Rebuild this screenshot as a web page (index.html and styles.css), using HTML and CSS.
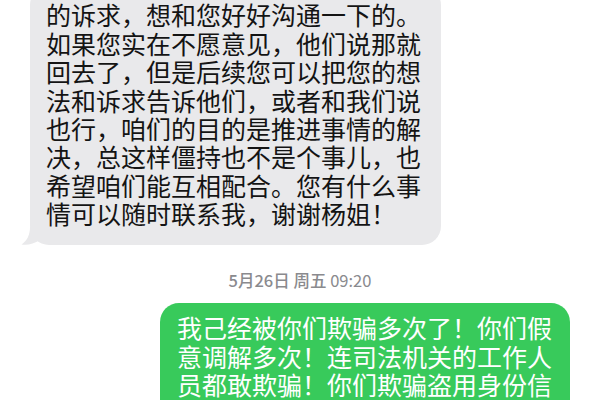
FILE: index.html
```html
<!DOCTYPE html>
<html lang="zh-CN">
<head>
<meta charset="utf-8">
<title>信息</title>
<link rel="stylesheet" href="styles.css">
</head>
<body>
<div class="chat">
  <div class="row row-in">
    <div class="bubble bubble-in">
      <p class="msg">的诉求，想和您好好沟通一下的。<br>如果您实在不愿意见，他们说那就<br>回去了，但是后续您可以把您的想<br>法和诉求告诉他们，或者和我们说<br>也行，咱们的目的是推进事情的解<br>决，总这样僵持也不是个事儿，也<br>希望咱们能互相配合。您有什么事<br>情可以随时联系我，谢谢杨姐！</p>
      <svg class="tail-in" width="20" height="18" viewBox="0 0 20 18"><path d="M9 0 C9 8 6 14 0.5 17.4 C6 18.4 13 17 19 13 L19 0 Z" fill="#e9e9eb"/></svg>
    </div>
  </div>
  <div class="stamp"><span class="stamp-day">5月26日 周五</span> <span class="stamp-time">09:20</span></div>
  <div class="row row-out">
    <div class="bubble bubble-out">
      <p class="msg">我己经被你们欺骗多次了！你们假<br>意调解多次！连司法机关的工作人<br>员都敢欺骗！你们欺骗盗用身份信<br>息</p>
    </div>
  </div>
</div>
</body>
</html>
```
FILE: styles.css
```css
html, body {
  margin: 0;
  padding: 0;
  background: #ffffff;
  overflow: hidden;
}
body {
  width: 600px;
  height: 400px;
  font-family: "Noto Sans CJK SC", "Noto Sans", sans-serif;
}
.chat {
  display: flex;
  flex-direction: column;
}
.row {
  display: flex;
}
.row-in {
  justify-content: flex-start;
  padding-left: 30px;
  margin-top: -14px;
}
.row-out {
  justify-content: flex-end;
  padding-right: 30px;
}
.bubble {
  position: relative;
  border-radius: 19px;
}
.msg {
  margin: 0;
  font-size: 25px;
  line-height: 28.4px;
  white-space: nowrap;
}
.bubble-in {
  background: #e9e9eb;
  color: #141414;
  padding: 14.4px 20px 17.4px 16px;
}
.bubble-out {
  background: #38ca5b;
  color: #ffffff;
  padding: 10.4px 18px 17px 17px;
  width: 375px;
}
.tail-in {
  position: absolute;
  left: -9px;
  bottom: 0;
}
.stamp {
  text-align: center;
  font-size: 16.5px;
  line-height: 22px;
  color: #8a8a8e;
  margin: 24px 0 12px;
}
.stamp-day {
  font-weight: 500;
}
.stamp-time {
  font-weight: 400;
}
```
